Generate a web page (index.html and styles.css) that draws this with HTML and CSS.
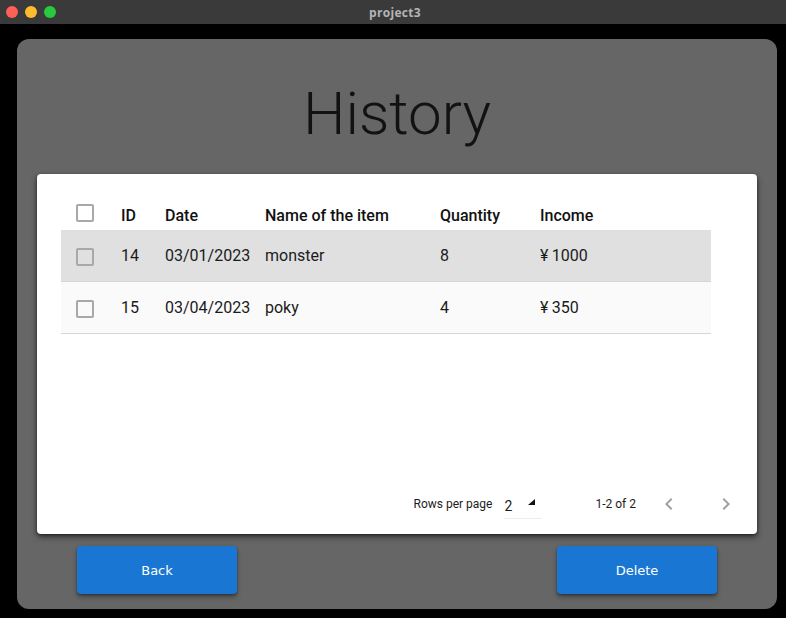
FILE: index.html
```html
<!DOCTYPE html>
<html>
<head>
<meta charset="utf-8">
<link rel="stylesheet" href="styles.css">
</head>
<body>
<div class="titlebar">
  <div class="lights">
    <span class="light red"></span>
    <span class="light yellow"></span>
    <span class="light green"></span>
  </div>
  <div class="wintitle">project3</div>
</div>
<div class="window">
  <div class="panel">
    <h1 class="title">History</h1>
    <div class="card">
      <div class="table">
        <div class="row head">
          <div class="cell cb"><span class="box"></span></div>
          <div class="cell c-id">ID</div>
          <div class="cell c-date">Date</div>
          <div class="cell c-name">Name of the item</div>
          <div class="cell c-qty">Quantity</div>
          <div class="cell c-inc">Income</div>
        </div>
        <div class="row body sel">
          <div class="cell cb"><span class="box"></span></div>
          <div class="cell c-id">14</div>
          <div class="cell c-date">03/01/2023</div>
          <div class="cell c-name">monster</div>
          <div class="cell c-qty">8</div>
          <div class="cell c-inc">¥&#8201;1000</div>
        </div>
        <div class="row body alt">
          <div class="cell cb"><span class="box"></span></div>
          <div class="cell c-id">15</div>
          <div class="cell c-date">03/04/2023</div>
          <div class="cell c-name">poky</div>
          <div class="cell c-qty">4</div>
          <div class="cell c-inc">¥&#8201;350</div>
        </div>
      </div>
      <div class="pager">
        <span class="rpp">Rows per page</span>
        <span class="select"><span class="sv">2</span><span class="tri"></span></span>
        <span class="range">1-2 of 2</span>
        <span class="nav">
          <svg width="24" height="24" viewBox="0 0 24 24"><path d="M15.4 7.4 14 6l-6 6 6 6 1.4-1.4L10.8 12z" fill="#a0a0a0"/></svg>
          <svg width="24" height="24" viewBox="0 0 24 24"><path d="M10 6 8.6 7.4 13.2 12l-4.6 4.6L10 18l6-6z" fill="#a0a0a0"/></svg>
        </span>
      </div>
    </div>
    <div class="actions">
      <button class="btn">Back</button>
      <button class="btn">Delete</button>
    </div>
  </div>
</div>
</body>
</html>
```
FILE: styles.css
```css
html, body {
  margin: 0;
  padding: 0;
}
body {
  width: 786px;
  height: 618px;
  background: #000;
  overflow: hidden;
  font-family: Roboto, "Liberation Sans", sans-serif;
}
.titlebar {
  height: 24px;
  background: #3a3a3a;
  display: flex;
  align-items: center;
  justify-content: center;
  position: relative;
}
.lights {
  position: absolute;
  left: 6px;
  top: 6px;
  display: flex;
  gap: 7px;
}
.light {
  width: 12px;
  height: 12px;
  border-radius: 50%;
  display: block;
}
.red { background: #fe5f57; }
.yellow { background: #febc2e; }
.green { background: #28c840; }
.wintitle {
  color: #b4b4b4;
  font-family: "Open Sans", "DejaVu Sans", sans-serif;
  font-weight: 700;
  font-size: 12px;
  letter-spacing: 0.3px;
  padding-left: 4px;
}
.window {
  padding: 15px 9px 9px 17px;
}
.panel {
  width: 760px;
  height: 570px;
  background: #666;
  border-radius: 12px;
  display: flex;
  flex-direction: column;
  align-items: center;
}
.title {
  margin: 37px 0 0 0;
  font-family: Roboto, sans-serif;
  font-weight: 300;
  font-size: 60px;
  line-height: 76px;
  color: #121212;
  height: 76px;
}
.card {
  margin-top: 22px;
  width: 720px;
  height: 360px;
  background: #fff;
  border-radius: 4px;
  box-shadow: 0 3px 6px rgba(0,0,0,0.5), 0 1px 3px rgba(0,0,0,0.4);
  box-sizing: border-box;
  padding: 23px 46px 0 24px;
  display: flex;
  flex-direction: column;
}
.table {
  width: 650px;
}
.row {
  display: flex;
  align-items: center;
  font-size: 16px;
  color: #1b1b1b;
}
.row.head {
  height: 33px;
  font-weight: 500;
  color: #111;
}
.row.head .cell:not(.cb) {
  padding-top: 3px;
}
.row.head .box { margin-top: -2px; }
.row.body {
  height: 52px;
  box-sizing: border-box;
  border-bottom: 1px solid #d6d6d6;
}
.row.sel { background: #e0e0e0; }
.row.alt { background: #fafafa; }
.cell.cb {
  width: 60px;
  box-sizing: border-box;
  padding-left: 15px;
  display: flex;
  align-items: center;
}
.box {
  width: 18px;
  height: 18px;
  box-sizing: border-box;
  border: 2px solid #a8a8a8;
  border-radius: 2px;
  display: block;
}
.row.body .box { margin-top: 2px; }
.c-id { width: 44px; }
.c-date { width: 100px; }
.c-name { width: 175px; }
.c-qty { width: 100px; }
.c-inc { width: 120px; }
.pager {
  margin-top: auto;
  margin-bottom: 18px;
  margin-right: -27px;
  display: flex;
  align-items: center;
  justify-content: flex-end;
  height: 24px;
  font-size: 12px;
  color: #1d1d1d;
}
.rpp {
  margin-right: 12px;
}
.select {
  width: 38px;
  height: 26px;
  box-sizing: border-box;
  border-bottom: 1px solid #ececec;
  display: flex;
  align-items: center;
  position: relative;
  margin-top: 4px;
  font-size: 14px;
}
.tri {
  position: absolute;
  left: 24px;
  top: 6px;
  width: 0;
  height: 0;
  border-left: 7px solid transparent;
  border-bottom: 6px solid #111;
}
.range {
  margin-left: 53px;
  margin-right: 21px;
}
.nav {
  display: flex;
  gap: 33px;
  height: 24px;
}
.actions {
  width: 640px;
  margin-top: 12px;
  display: flex;
  justify-content: space-between;
}
.btn {
  width: 160px;
  height: 48px;
  border: none;
  border-radius: 4px;
  background: #1976d2;
  color: #fff;
  font-family: "DejaVu Sans", sans-serif;
  font-size: 13px;
  box-shadow: 0 3px 5px rgba(0,0,0,0.35), 0 1px 2px rgba(0,0,0,0.3);
  padding: 0;
}
```
